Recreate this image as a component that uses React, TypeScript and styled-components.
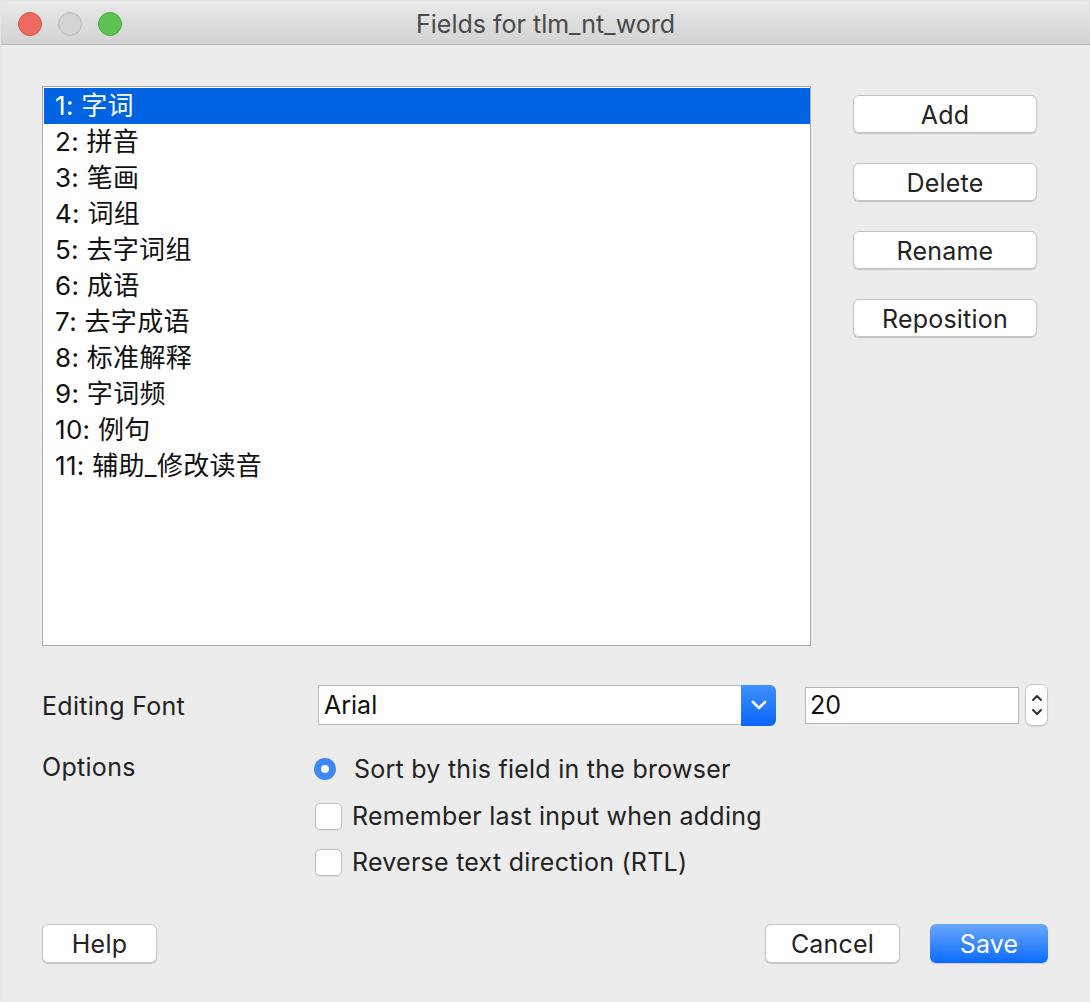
import React from "react";
import styled, { createGlobalStyle } from "styled-components";

const Global = createGlobalStyle`
  html, body { margin: 0; padding: 0; background: #e4e4e4; }
  body { font-family: Inter, "Noto Sans CJK SC", sans-serif; }
  * { box-sizing: border-box; }
`;

const FONT = `Inter, "Noto Sans CJK SC", sans-serif`;

const Window = styled.div`
  margin: 1px 0 0 1px;
  width: 1089px;
  height: 1001px;
  background: #ececec;
  border-radius: 7px 7px 0 0;
  overflow: hidden;
  display: flex;
  flex-direction: column;
  font-family: ${FONT};
  color: #222;
`;

const TitleBar = styled.div`
  height: 44px;
  flex: none;
  position: relative;
  display: flex;
  align-items: center;
  justify-content: center;
  background: linear-gradient(#e9e9e9, #d3d3d3);
  border-bottom: 1px solid #b6b6b6;
`;

const Lights = styled.div`
  position: absolute;
  left: 17px;
  top: 11px;
  display: flex;
  gap: 16px;
`;

const Light = styled.span<{ $c: string; $b: string }>`
  width: 24px;
  height: 24px;
  border-radius: 50%;
  background: ${(p) => p.$c};
  border: 1px solid ${(p) => p.$b};
`;

const Title = styled.div`
  font-size: 25px;
  color: #4a4a4a;
  padding-top: 3px;
`;

const Body = styled.div`
  flex: 1;
  padding: 41px 41px 0 41px;
  display: flex;
  flex-direction: column;
`;

const Top = styled.div`
  display: flex;
  align-items: flex-start;
`;

const List = styled.div`
  width: 769px;
  height: 560px;
  background: #fff;
  border: 1px solid #a9a9a9;
  padding: 1px 0 0 1px;
  display: flex;
  flex-direction: column;
`;

const Row = styled.div<{ $sel?: boolean }>`
  height: 36px;
  line-height: 36px;
  padding-left: 11px;
  font-size: 26px;
  letter-spacing: 0.3px;
  white-space: nowrap;
  background: ${(p) => (p.$sel ? "#0063e1" : "transparent")};
  color: ${(p) => (p.$sel ? "#fff" : "#111")};
`;

const SideButtons = styled.div`
  margin-left: 42px;
  padding-top: 9px;
  display: flex;
  flex-direction: column;
  gap: 30px;
`;

const Button = styled.button<{ $w: number; $h?: number; $primary?: boolean }>`
  width: ${(p) => p.$w}px;
  height: ${(p) => p.$h ?? 39}px;
  border-radius: 6px;
  font-family: ${FONT};
  font-size: 25px;
  letter-spacing: 0.2px;
  padding: 1px 0 0 0;
  cursor: default;
  color: ${(p) => (p.$primary ? "#fff" : "#222")};
  background: ${(p) =>
    p.$primary ? "linear-gradient(#6aa7fb, #0b6bfe)" : "#fff"};
  border: ${(p) => (p.$primary ? "none" : "1px solid #c6c6c6")};
  box-shadow: ${(p) =>
    p.$primary ? "0 1px 1px rgba(0,0,0,0.15)" : "0 1px 1px rgba(0,0,0,0.18)"};
`;

const Form = styled.div`
  margin-top: 38px;
  display: grid;
  grid-template-columns: 276px 1fr;
  row-gap: 21px;
`;

const Label = styled.div<{ $pt: number }>`
  font-size: 25px;
  letter-spacing: 0.3px;
  padding-top: ${(p) => p.$pt}px;
  color: #222;
`;

const FontRow = styled.div`
  display: flex;
  align-items: center;
`;

const Combo = styled.div`
  width: 458px;
  height: 41px;
  display: flex;
  border-radius: 0 6px 6px 0;
`;

const ComboField = styled.div`
  flex: 1;
  background: #fff;
  border: 1px solid #b8b8b8;
  border-right: none;
  font-size: 25px;
  color: #111;
  padding-left: 5px;
  display: flex;
  align-items: center;
  height: 40px;
`;

const ComboArrow = styled.div`
  width: 35px;
  height: 41px;
  border-radius: 0 6px 6px 0;
  background: linear-gradient(#3f91fa, #0966fe);
  display: flex;
  align-items: center;
  justify-content: center;
`;

const SizeField = styled.div`
  margin-left: 29px;
  width: 214px;
  height: 37px;
  background: #fff;
  border: 1px solid #b3b3b3;
  font-size: 25px;
  color: #111;
  padding-left: 4px;
  display: flex;
  align-items: center;
`;

const Stepper = styled.div`
  margin-left: 6px;
  width: 23px;
  height: 42px;
  background: #fff;
  border: 1px solid #c4c4c4;
  border-radius: 7px;
  box-shadow: 0 1px 1px rgba(0, 0, 0, 0.1);
  display: flex;
  flex-direction: column;
  align-items: center;
  justify-content: center;
  gap: 6px;
`;

const Options = styled.div`
  display: flex;
  flex-direction: column;
`;

const Option = styled.div<{ $h: number }>`
  height: ${(p) => p.$h}px;
  display: flex;
  align-items: center;
  font-size: 25px;
  letter-spacing: 0.25px;
  color: #222;
`;

const Radio = styled.span`
  width: 22px;
  height: 22px;
  margin-left: -4px;
  margin-right: 18px;
  border-radius: 50%;
  background: #3b88f6;
  display: flex;
  align-items: center;
  justify-content: center;
  &::after {
    content: "";
    width: 8px;
    height: 8px;
    border-radius: 50%;
    background: #fff;
  }
`;

const Check = styled.span`
  width: 27px;
  height: 27px;
  margin-left: -3px;
  margin-right: 10px;
  border-radius: 5px;
  background: #fff;
  border: 1px solid #bdbdbd;
  box-shadow: 0 1px 1px rgba(0, 0, 0, 0.06);
`;

const Footer = styled.div`
  margin-top: auto;
  margin-bottom: 39px;
  display: flex;
  align-items: center;
`;

const FooterRight = styled.div`
  margin-left: auto;
  margin-right: 1px;
  display: flex;
  gap: 30px;
`;

const fields = [
  "1: 字词",
  "2: 拼音",
  "3: 笔画",
  "4: 词组",
  "5: 去字词组",
  "6: 成语",
  "7: 去字成语",
  "8: 标准解释",
  "9: 字词频",
  "10: 例句",
  "11: 辅助_修改读音",
];

export default function App() {
  return (
    <>
      <Global />
      <Window>
        <TitleBar>
          <Lights>
            <Light $c="#ee6a5f" $b="#d5574c" />
            <Light $c="#d4d4d4" $b="#bababa" />
            <Light $c="#5dc453" $b="#4aa83e" />
          </Lights>
          <Title>Fields for tlm_nt_word</Title>
        </TitleBar>
        <Body>
          <Top>
            <List>
              {fields.map((f, i) => (
                <Row key={f} $sel={i === 0}>
                  {f}
                </Row>
              ))}
            </List>
            <SideButtons>
              <Button $w={184} $h={38}>Add</Button>
              <Button $w={184} $h={38}>Delete</Button>
              <Button $w={184} $h={38}>Rename</Button>
              <Button $w={184} $h={38}>Reposition</Button>
            </SideButtons>
          </Top>
          <Form>
            <Label $pt={7}>Editing Font</Label>
            <FontRow>
              <Combo>
                <ComboField>Arial</ComboField>
                <ComboArrow>
                  <svg width="16" height="10" viewBox="0 0 16 10">
                    <path
                      d="M2 2l6 6 6-6"
                      fill="none"
                      stroke="#fff"
                      strokeWidth="2.6"
                      strokeLinecap="round"
                      strokeLinejoin="round"
                    />
                  </svg>
                </ComboArrow>
              </Combo>
              <SizeField>20</SizeField>
              <Stepper>
                <svg width="12" height="8" viewBox="0 0 12 8">
                  <path
                    d="M2 6l4-4 4 4"
                    fill="none"
                    stroke="#333"
                    strokeWidth="2"
                    strokeLinecap="round"
                    strokeLinejoin="round"
                  />
                </svg>
                <svg width="12" height="8" viewBox="0 0 12 8">
                  <path
                    d="M2 2l4 4 4-4"
                    fill="none"
                    stroke="#333"
                    strokeWidth="2"
                    strokeLinecap="round"
                    strokeLinejoin="round"
                  />
                </svg>
              </Stepper>
            </FontRow>
            <Label $pt={5}>Options</Label>
            <Options>
              <Option $h={44}>
                <Radio />
                Sort by this field in the browser
              </Option>
              <Option $h={50}>
                <Check />
                Remember last input when adding
              </Option>
              <Option $h={42}>
                <Check />
                Reverse text direction (RTL)
              </Option>
            </Options>
          </Form>
          <Footer>
            <Button $w={115}>Help</Button>
            <FooterRight>
              <Button $w={135}>Cancel</Button>
              <Button $w={118} $primary>
                Save
              </Button>
            </FooterRight>
          </Footer>
        </Body>
      </Window>
    </>
  );
}
